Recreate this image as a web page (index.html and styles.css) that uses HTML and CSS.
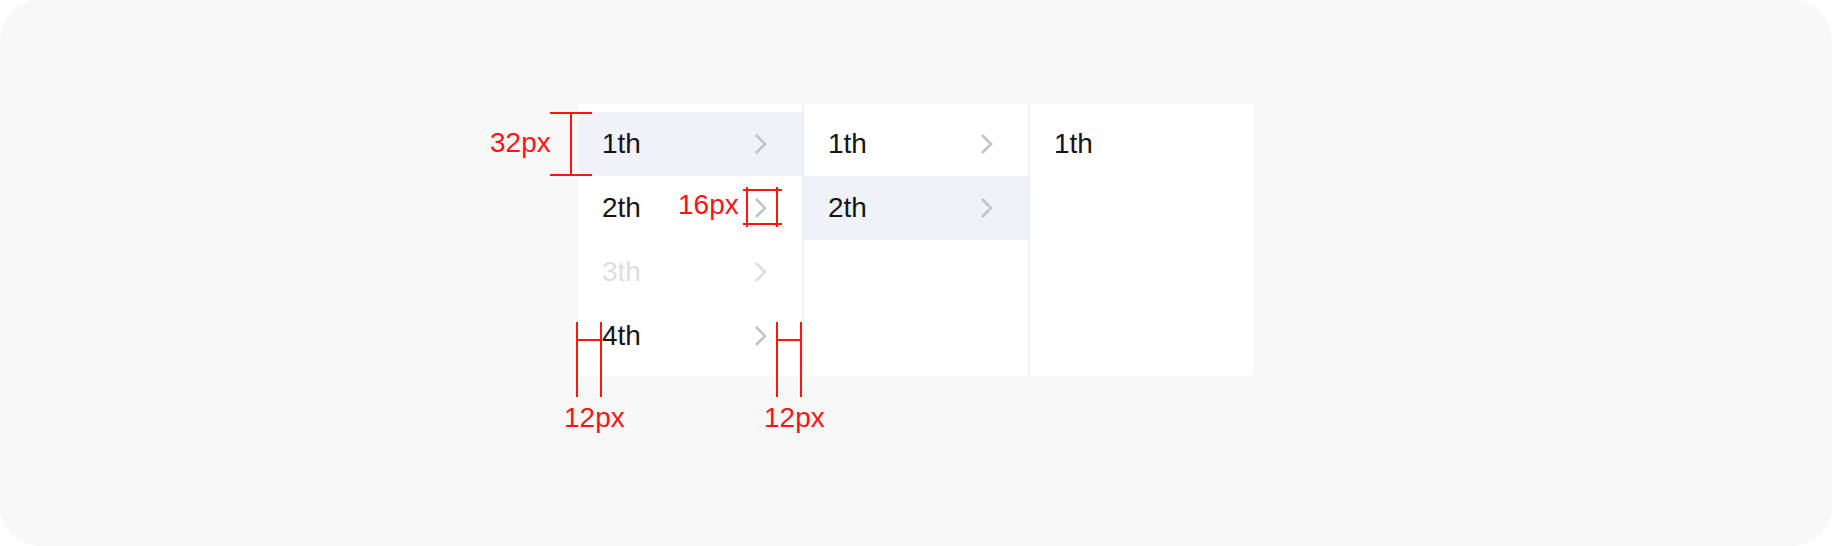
FILE: index.html
```html
<!DOCTYPE html>
<html lang="en">
<head>
<meta charset="utf-8">
<title>Cascader spec</title>
<link rel="stylesheet" href="styles.css">
</head>
<body>
<div class="frame">
  <div class="panel-wrap">
    <div class="panel">
      <div class="col">
        <div class="item active"><span class="label">1th</span><svg class="arrow" viewBox="0 0 32 32"><path d="M10 7 L19 16 L10 25"/></svg></div>
        <div class="item"><span class="label">2th</span><svg class="arrow" viewBox="0 0 32 32"><path d="M10 7 L19 16 L10 25"/></svg></div>
        <div class="item disabled"><span class="label">3th</span><svg class="arrow" viewBox="0 0 32 32"><path d="M10 7 L19 16 L10 25"/></svg></div>
        <div class="item"><span class="label">4th</span><svg class="arrow" viewBox="0 0 32 32"><path d="M10 7 L19 16 L10 25"/></svg></div>
      </div>
      <div class="col bordered">
        <div class="item"><span class="label">1th</span><svg class="arrow" viewBox="0 0 32 32"><path d="M10 7 L19 16 L10 25"/></svg></div>
        <div class="item active"><span class="label">2th</span><svg class="arrow" viewBox="0 0 32 32"><path d="M10 7 L19 16 L10 25"/></svg></div>
      </div>
      <div class="col bordered">
        <div class="item"><span class="label">1th</span></div>
      </div>
    </div>

    <div class="anno">
      <span class="a-text t32">32px</span>
      <span class="line v32"></span>
      <span class="line h32a"></span>
      <span class="line h32b"></span>

      <span class="a-text t16">16px</span>
      <span class="line v16a"></span>
      <span class="line v16b"></span>
      <span class="line h16a"></span>
      <span class="line h16b"></span>

      <span class="line v12la"></span>
      <span class="line v12lb"></span>
      <span class="line h12l"></span>
      <span class="a-text t12l">12px</span>

      <span class="line v12ra"></span>
      <span class="line v12rb"></span>
      <span class="line h12r"></span>
      <span class="a-text t12r">12px</span>
    </div>
  </div>
</div>
</body>
</html>
```
FILE: styles.css
```css
html, body {
  margin: 0;
  padding: 0;
  background: #ffffff;
}
.frame {
  width: 1832px;
  height: 546px;
  box-sizing: border-box;
  background: #f8f8f8;
  border-radius: 40px;
  display: flex;
  justify-content: center;
  align-items: flex-start;
  padding-top: 104px;
  font-family: "Liberation Sans", Arial, sans-serif;
}
.panel-wrap {
  position: relative;
}
.panel {
  display: flex;
  background: #ffffff;
  height: 272px;
  border-bottom-right-radius: 8px;
  box-sizing: border-box;
}
.col {
  width: 224px;
  padding: 8px 0;
  box-sizing: content-box;
}
.col.bordered {
  border-left: 2px solid #eef0f5;
}
.item {
  height: 64px;
  display: flex;
  align-items: center;
  justify-content: space-between;
  padding: 0 24px;
  box-sizing: border-box;
}
.item.active {
  background: #eff2f9;
}
.label {
  font-size: 28px;
  line-height: 64px;
  color: #141414;
}
.disabled .label {
  color: #dcdde0;
}
.arrow {
  width: 32px;
  height: 32px;
  flex: none;
}
.arrow path {
  fill: none;
  stroke: #c3c3c3;
  stroke-width: 2.6;
}
.disabled .arrow path {
  stroke: #dcdde0;
}

/* annotations */
.anno {
  position: absolute;
  left: 0;
  top: 0;
  width: 0;
  height: 0;
}
.line {
  position: absolute;
  background: #ff1414;
}
.a-text {
  position: absolute;
  font-size: 28px;
  line-height: 28px;
  color: #ff1414;
  white-space: nowrap;
}
.t32 { left: -88px; top: 25px; }
.v32 { left: -8px; top: 8px; width: 2px; height: 64px; }
.h32a { left: -28px; top: 8px; width: 42px; height: 2px; }
.h32b { left: -28px; top: 70px; width: 42px; height: 2px; }

.t16 { left: 100px; top: 87px; }
.v16a { left: 168px; top: 83px; width: 2px; height: 40px; }
.v16b { left: 198px; top: 83px; width: 2px; height: 40px; }
.h16a { left: 165px; top: 85px; width: 39px; height: 2px; }
.h16b { left: 165px; top: 119px; width: 39px; height: 2px; }

.v12la { left: -2px; top: 218px; width: 2px; height: 75px; }
.v12lb { left: 22px; top: 218px; width: 2px; height: 75px; }
.h12l { left: -2px; top: 235px; width: 26px; height: 2px; }
.t12l { left: -14px; top: 300px; }

.v12ra { left: 198px; top: 218px; width: 2px; height: 75px; }
.v12rb { left: 222px; top: 218px; width: 2px; height: 75px; }
.h12r { left: 198px; top: 235px; width: 26px; height: 2px; }
.t12r { left: 186px; top: 300px; }
```
